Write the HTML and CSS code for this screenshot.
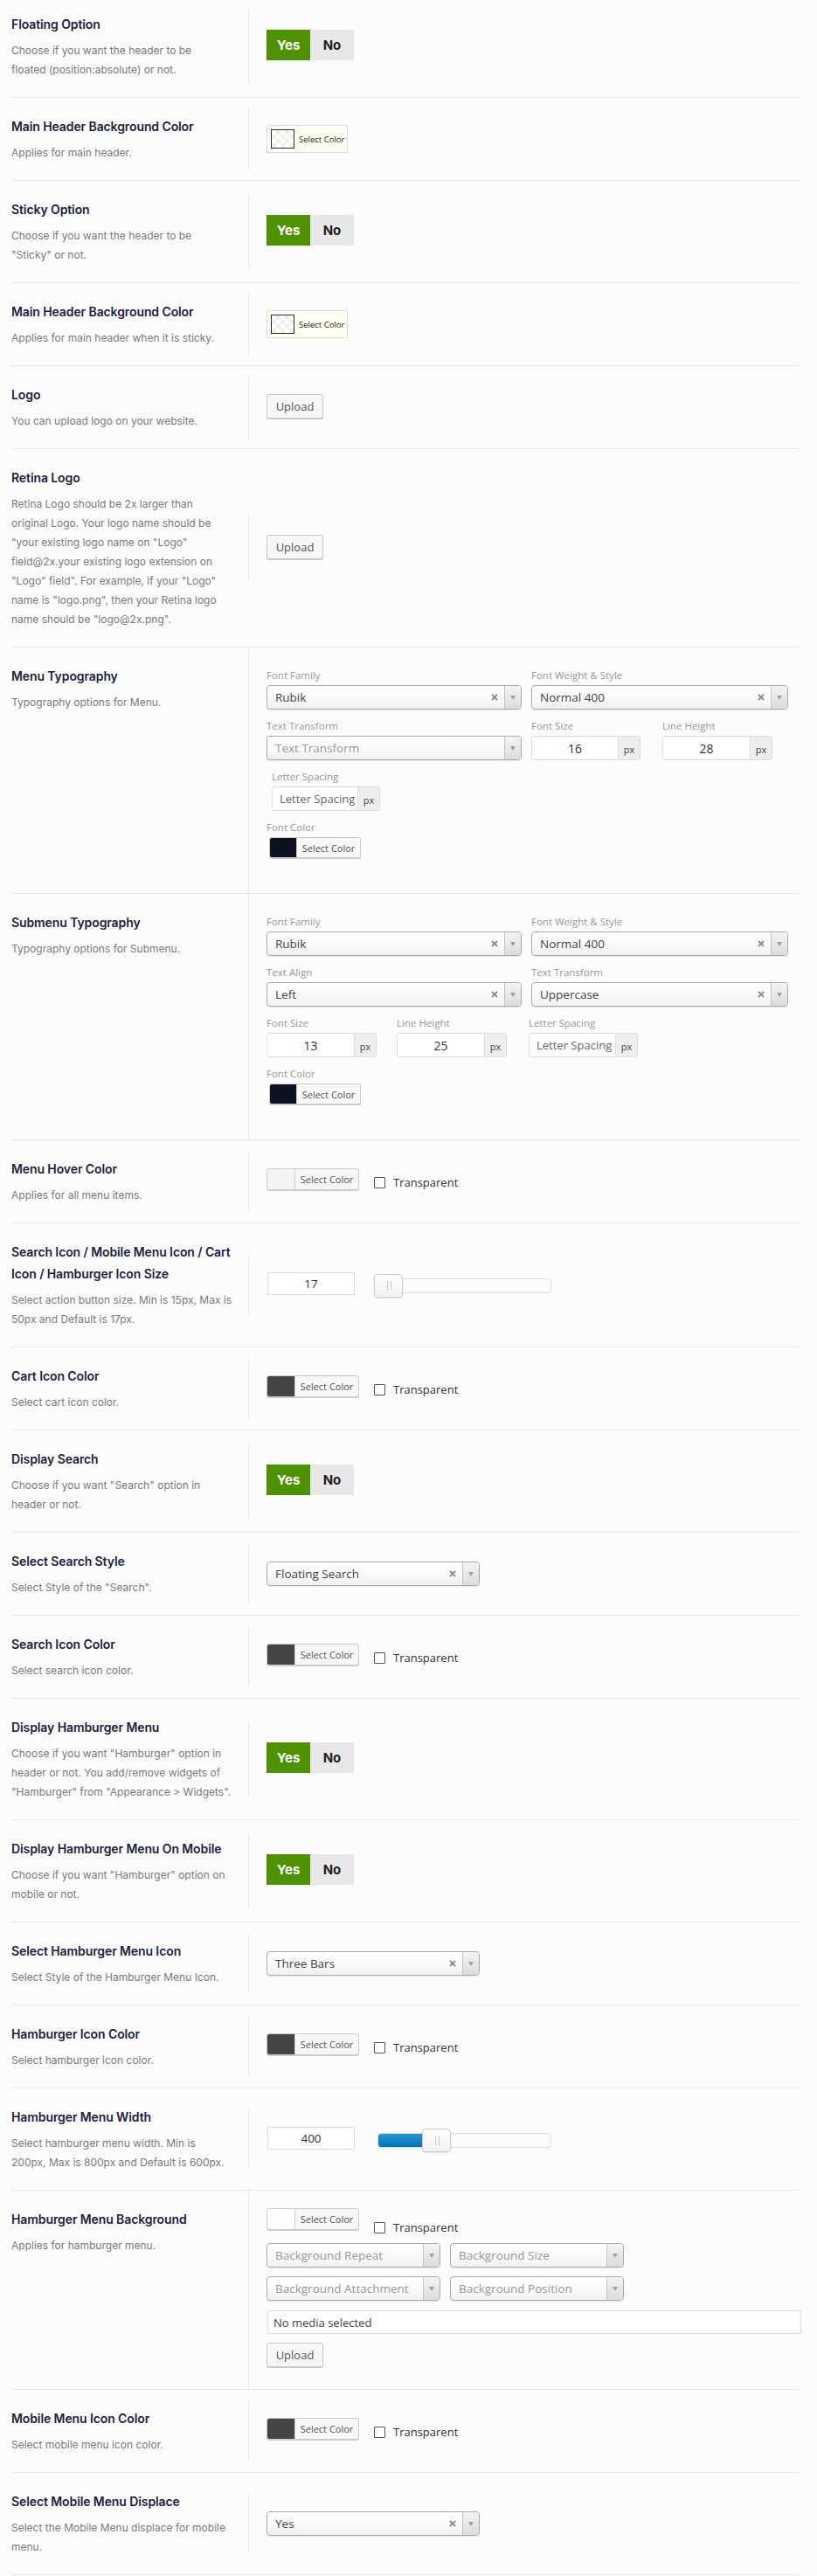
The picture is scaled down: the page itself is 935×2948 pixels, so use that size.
FILE: index.html
```html
<!DOCTYPE html>
<html>
<head>
<meta charset="utf-8">
<title>Header Options</title>
<link rel="stylesheet" href="styles.css">
</head>
<body>
<div class="panel">

  <div class="row">
    <div class="info"><h3 class="title">Floating Option</h3><p class="desc">Choose if you want the header to be<br>floated (position:absolute) or not.</p></div>
    <div class="field"><div class="switch"><span class="sw-yes">Yes</span><span class="sw-no">No</span></div></div>
  </div>

  <div class="row">
    <div class="info"><h3 class="title">Main Header Background Color</h3><p class="desc">Applies for main header.</p></div>
    <div class="field"><div class="picker-a"><span class="pa-swatch"></span><span class="pa-text">Select Color</span></div></div>
  </div>

  <div class="row">
    <div class="info"><h3 class="title">Sticky Option</h3><p class="desc">Choose if you want the header to be<br>"Sticky" or not.</p></div>
    <div class="field"><div class="switch"><span class="sw-yes">Yes</span><span class="sw-no">No</span></div></div>
  </div>

  <div class="row">
    <div class="info"><h3 class="title">Main Header Background Color</h3><p class="desc">Applies for main header when it is sticky.</p></div>
    <div class="field"><div class="picker-a"><span class="pa-swatch"></span><span class="pa-text">Select Color</span></div></div>
  </div>

  <div class="row">
    <div class="info"><h3 class="title">Logo</h3><p class="desc">You can upload logo on your website.</p></div>
    <div class="field"><div class="btn">Upload</div></div>
  </div>

  <div class="row">
    <div class="info"><h3 class="title">Retina Logo</h3><p class="desc">Retina Logo should be 2x larger than<br>original Logo. Your logo name should be<br>"your existing logo name on "Logo"<br>field@2x.your existing logo extension on<br>"Logo" field". For example, if your "Logo"<br>name is "logo.png", then your Retina logo<br>name should be "logo@2x.png".</p></div>
    <div class="field"><div class="btn">Upload</div></div>
  </div>

  <div class="row">
    <div class="info"><h3 class="title">Menu Typography</h3><p class="desc">Typography options for Menu.</p></div>
    <div class="field typo">
      <div class="tline">
        <div class="tf w-292"><span class="tf-label">Font Family</span>
          <div class="select"><span class="sel-val">Rubik</span><svg class="sel-clear" viewBox="0 0 8 8"><path d="M1 1L7 7M7 1L1 7"/></svg><span class="sel-arrow"></span></div></div>
        <div class="tf w-294 ml-11"><span class="tf-label">Font Weight &amp; Style</span>
          <div class="select"><span class="sel-val">Normal 400</span><svg class="sel-clear" viewBox="0 0 8 8"><path d="M1 1L7 7M7 1L1 7"/></svg><span class="sel-arrow"></span></div></div>
      </div>
      <div class="tline">
        <div class="tf w-292"><span class="tf-label">Text Transform</span>
          <div class="select"><span class="sel-val ph">Text Transform</span><span class="sel-arrow"></span></div></div>
        <div class="tf w-125 ml-11"><span class="tf-label">Font Size</span>
          <div class="unit"><span class="unit-val">16</span><span class="unit-px">px</span></div></div>
        <div class="tf w-126 ml-25"><span class="tf-label">Line Height</span>
          <div class="unit"><span class="unit-val">28</span><span class="unit-px">px</span></div></div>
      </div>
      <div class="tline">
        <div class="tf w-124 ml-6"><span class="tf-label">Letter Spacing</span>
          <div class="unit"><span class="unit-val ph">Letter Spacing</span><span class="unit-px">px</span></div></div>
      </div>
      <div class="tline">
        <div class="tf"><span class="tf-label">Font Color</span>
          <div class="picker pk-typo"><span class="swatch sw-navy"></span><span class="pk-text">Select Color</span></div></div>
      </div>
    </div>
  </div>

  <div class="row">
    <div class="info"><h3 class="title">Submenu Typography</h3><p class="desc">Typography options for Submenu.</p></div>
    <div class="field typo">
      <div class="tline">
        <div class="tf w-292"><span class="tf-label">Font Family</span>
          <div class="select"><span class="sel-val">Rubik</span><svg class="sel-clear" viewBox="0 0 8 8"><path d="M1 1L7 7M7 1L1 7"/></svg><span class="sel-arrow"></span></div></div>
        <div class="tf w-294 ml-11"><span class="tf-label">Font Weight &amp; Style</span>
          <div class="select"><span class="sel-val">Normal 400</span><svg class="sel-clear" viewBox="0 0 8 8"><path d="M1 1L7 7M7 1L1 7"/></svg><span class="sel-arrow"></span></div></div>
      </div>
      <div class="tline">
        <div class="tf w-292"><span class="tf-label">Text Align</span>
          <div class="select"><span class="sel-val">Left</span><svg class="sel-clear" viewBox="0 0 8 8"><path d="M1 1L7 7M7 1L1 7"/></svg><span class="sel-arrow"></span></div></div>
        <div class="tf w-294 ml-11"><span class="tf-label">Text Transform</span>
          <div class="select"><span class="sel-val">Uppercase</span><svg class="sel-clear" viewBox="0 0 8 8"><path d="M1 1L7 7M7 1L1 7"/></svg><span class="sel-arrow"></span></div></div>
      </div>
      <div class="tline">
        <div class="tf w-126"><span class="tf-label">Font Size</span>
          <div class="unit"><span class="unit-val">13</span><span class="unit-px">px</span></div></div>
        <div class="tf w-126 ml-23"><span class="tf-label">Line Height</span>
          <div class="unit"><span class="unit-val">25</span><span class="unit-px">px</span></div></div>
        <div class="tf w-125 ml-25"><span class="tf-label">Letter Spacing</span>
          <div class="unit"><span class="unit-val ph">Letter Spacing</span><span class="unit-px">px</span></div></div>
      </div>
      <div class="tline">
        <div class="tf"><span class="tf-label">Font Color</span>
          <div class="picker pk-typo"><span class="swatch sw-navy"></span><span class="pk-text">Select Color</span></div></div>
      </div>
    </div>
  </div>

  <div class="row">
    <div class="info"><h3 class="title">Menu Hover Color</h3><p class="desc">Applies for all menu items.</p></div>
    <div class="field"><div class="color-line"><div class="picker"><span class="swatch sw-empty"></span><span class="pk-text">Select Color</span></div><label class="check"><span class="box"></span>Transparent</label></div></div>
  </div>

  <div class="row">
    <div class="info"><h3 class="title">Search Icon / Mobile Menu Icon / Cart<br>Icon / Hamburger Icon Size</h3><p class="desc">Select action button size. Min is 15px, Max is<br>50px and Default is 17px.</p></div>
    <div class="field"><div class="slider-line"><div class="num">17</div><div class="track"><div class="range" style="width:5.7%"></div><span class="handle" style="left:calc(5.7% - 16px)"></span></div></div></div>
  </div>

  <div class="row">
    <div class="info"><h3 class="title">Cart Icon Color</h3><p class="desc">Select cart icon color.</p></div>
    <div class="field"><div class="color-line"><div class="picker"><span class="swatch sw-dark"></span><span class="pk-text">Select Color</span></div><label class="check"><span class="box"></span>Transparent</label></div></div>
  </div>

  <div class="row">
    <div class="info"><h3 class="title">Display Search</h3><p class="desc">Choose if you want "Search" option in<br>header or not.</p></div>
    <div class="field"><div class="switch"><span class="sw-yes">Yes</span><span class="sw-no">No</span></div></div>
  </div>

  <div class="row">
    <div class="info"><h3 class="title">Select Search Style</h3><p class="desc">Select Style of the "Search".</p></div>
    <div class="field"><div class="select w-244"><span class="sel-val">Floating Search</span><svg class="sel-clear" viewBox="0 0 8 8"><path d="M1 1L7 7M7 1L1 7"/></svg><span class="sel-arrow"></span></div></div>
  </div>

  <div class="row">
    <div class="info"><h3 class="title">Search Icon Color</h3><p class="desc">Select search icon color.</p></div>
    <div class="field"><div class="color-line"><div class="picker"><span class="swatch sw-dark"></span><span class="pk-text">Select Color</span></div><label class="check"><span class="box"></span>Transparent</label></div></div>
  </div>

  <div class="row">
    <div class="info"><h3 class="title">Display Hamburger Menu</h3><p class="desc">Choose if you want "Hamburger" option in<br>header or not. You add/remove widgets of<br>"Hamburger" from "Appearance &gt; Widgets".</p></div>
    <div class="field"><div class="switch"><span class="sw-yes">Yes</span><span class="sw-no">No</span></div></div>
  </div>

  <div class="row">
    <div class="info"><h3 class="title">Display Hamburger Menu On Mobile</h3><p class="desc">Choose if you want "Hamburger" option on<br>mobile or not.</p></div>
    <div class="field"><div class="switch"><span class="sw-yes">Yes</span><span class="sw-no">No</span></div></div>
  </div>

  <div class="row">
    <div class="info"><h3 class="title">Select Hamburger Menu Icon</h3><p class="desc">Select Style of the Hamburger Menu Icon.</p></div>
    <div class="field"><div class="select w-244"><span class="sel-val">Three Bars</span><svg class="sel-clear" viewBox="0 0 8 8"><path d="M1 1L7 7M7 1L1 7"/></svg><span class="sel-arrow"></span></div></div>
  </div>

  <div class="row">
    <div class="info"><h3 class="title">Hamburger Icon Color</h3><p class="desc">Select hamburger icon color.</p></div>
    <div class="field"><div class="color-line"><div class="picker"><span class="swatch sw-dark"></span><span class="pk-text">Select Color</span></div><label class="check"><span class="box"></span>Transparent</label></div></div>
  </div>

  <div class="row">
    <div class="info"><h3 class="title">Hamburger Menu Width</h3><p class="desc">Select hamburger menu width. Min is<br>200px, Max is 800px and Default is 600px.</p></div>
    <div class="field"><div class="slider-line"><div class="num">400</div><div class="track"><div class="range" style="width:33.3%"></div><span class="handle" style="left:calc(33.3% - 16px)"></span></div></div></div>
  </div>

  <div class="row">
    <div class="info"><h3 class="title">Hamburger Menu Background</h3><p class="desc">Applies for hamburger menu.</p></div>
    <div class="field bg-stack">
      <div class="color-line tall"><div class="picker"><span class="swatch sw-white"></span><span class="pk-text">Select Color</span></div><label class="check low"><span class="box"></span>Transparent</label></div>
      <div class="bg-selects">
        <div class="select w-199"><span class="sel-val ph">Background Repeat</span><span class="sel-arrow"></span></div>
        <div class="select w-199"><span class="sel-val ph">Background Size</span><span class="sel-arrow"></span></div>
      </div>
      <div class="bg-selects second">
        <div class="select w-199"><span class="sel-val ph">Background Attachment</span><span class="sel-arrow"></span></div>
        <div class="select w-199"><span class="sel-val ph">Background Position</span><span class="sel-arrow"></span></div>
      </div>
      <div class="media">No media selected</div>
      <div class="btn btn-media">Upload</div>
    </div>
  </div>

  <div class="row">
    <div class="info"><h3 class="title">Mobile Menu Icon Color</h3><p class="desc">Select mobile menu icon color.</p></div>
    <div class="field"><div class="color-line"><div class="picker"><span class="swatch sw-dark"></span><span class="pk-text">Select Color</span></div><label class="check"><span class="box"></span>Transparent</label></div></div>
  </div>

  <div class="row">
    <div class="info"><h3 class="title">Select Mobile Menu Displace</h3><p class="desc">Select the Mobile Menu displace for mobile<br>menu.</p></div>
    <div class="field"><div class="select w-244"><span class="sel-val">Yes</span><svg class="sel-clear" viewBox="0 0 8 8"><path d="M1 1L7 7M7 1L1 7"/></svg><span class="sel-arrow"></span></div></div>
  </div>

</div>
</body>
</html>
```

FILE: styles.css
```css
* { box-sizing: border-box; }

body {
  margin: 0;
  background: #fcfcfc;
  font-family: "Inter", "Open Sans", sans-serif;
}

.panel {
  margin: -5px 20px 0 13px;
}

.row {
  display: flex;
  border-bottom: 1px solid #e6e6e6;
}

.info {
  flex: 0 0 271px;
  align-self: flex-start;
  padding: 20px 0;
}

.title {
  margin: 0 0 7px;
  font-size: 14px;
  line-height: 25px;
  font-weight: 600;
  color: #1b2240;
  letter-spacing: -0.1px;
}

.desc {
  margin: 0;
  font-size: 12px;
  line-height: 22px;
  color: #7b7b7b;
}

.field {
  flex: 1;
  align-self: center;
  border-left: 1px solid #e8e8e8;
  padding: 20px 0 20px 20px;
  font-family: "Open Sans", "Liberation Sans", sans-serif;
}

/* Yes / No switch */
.switch {
  display: flex;
  width: 100px;
  height: 35px;
  margin: 4px 0 7px;
  font-family: "Inter", sans-serif;
  font-weight: 700;
  font-size: 15px;
}
.switch span {
  flex: 1;
  display: flex;
  align-items: center;
  justify-content: center;
}
.sw-yes { background: #4f9200; color: #fff; }
.sw-no { background: #e8e8e8; color: #222; }

/* cream picker */
.picker-a {
  display: flex;
  align-items: center;
  width: 93px;
  height: 32px;
  padding: 0 4px;
  background: #fffef2;
  border: 1px solid #dedede;
}
.pa-swatch {
  flex: none;
  width: 27px;
  height: 22px;
  border: 1px solid #2a2a2a;
  background: repeating-conic-gradient(#eeeeee 0 25%, #ffffff 0 50%) 0 0 / 10px 10px;
}
.pa-text {
  margin-left: 5px;
  font-size: 9.5px;
  color: #222;
  white-space: nowrap;
}

/* button */
.btn {
  display: flex;
  align-items: center;
  justify-content: center;
  width: 65px;
  height: 28px;
  margin: 2px 0 5px;
  border: 1px solid #c8c8c8;
  border-radius: 3px;
  background: #f7f7f7;
  box-shadow: 0 1px 0 #cccccc;
  font-size: 13px;
  color: #555;
}

/* chosen-like select */
.select {
  display: flex;
  align-items: center;
  height: 28px;
  border: 1px solid #aaaaaa;
  border-radius: 4px;
  background: linear-gradient(#ffffff 0%, #fbfbfb 45%, #f1f1f1 100%);
  box-shadow: 0 1px 1px rgba(0, 0, 0, 0.08);
  font-size: 13.5px;
  color: #444;
  overflow: hidden;
}
.sel-val {
  flex: 1;
  padding-left: 9px;
  white-space: nowrap;
  overflow: hidden;
}
.sel-val.ph { color: #999; }
.sel-clear {
  flex: none;
  width: 8px;
  height: 8px;
  margin-right: 7px;
  stroke: #8a8a8a;
  stroke-width: 1.8;
}
.sel-arrow {
  flex: none;
  width: 19px;
  align-self: stretch;
  display: flex;
  align-items: center;
  justify-content: center;
  border-left: 1px solid #c4c4c4;
  background: linear-gradient(#f4f4f4, #dcdcdc);
}
.sel-arrow::after {
  content: "";
  border-left: 3px solid transparent;
  border-right: 3px solid transparent;
  border-top: 5px solid #a0a0a0;
}

.w-244 { width: 244px; }
.w-199 { width: 199px; }

/* typography block */
.field.typo {
  align-self: stretch;
  padding: 22px 0 40px 20px;
}
.tline { display: flex; }
.tline + .tline { margin-top: 9px; }
.tf { display: flex; flex-direction: column; }
.tf-label {
  display: block;
  font-size: 11.5px;
  line-height: 20px;
  margin-bottom: 1px;
  color: #999;
}
.w-292 { width: 292px; }
.w-294 { width: 294px; }
.w-124 { width: 124px; }
.w-125 { width: 125px; }
.w-126 { width: 126px; }
.ml-6 { margin-left: 6px; }
.ml-11 { margin-left: 11px; }
.ml-23 { margin-left: 23px; }
.ml-25 { margin-left: 25px; }

.unit {
  display: flex;
  height: 28px;
  border: 1px solid #dddddd;
  border-radius: 3px;
  background: #fff;
  font-size: 14px;
  color: #333;
  overflow: hidden;
}
.unit-val {
  flex: 1;
  display: flex;
  align-items: center;
  justify-content: center;
  white-space: nowrap;
  overflow: hidden;
}
.unit-val.ph {
  justify-content: flex-start;
  padding-left: 8px;
  font-size: 13px;
  color: #666;
}
.unit-px {
  flex: none;
  width: 25px;
  display: flex;
  align-items: center;
  justify-content: center;
  padding-top: 2px;
  border-left: 1px solid #dddddd;
  background: #eeeeee;
  font-size: 11px;
  color: #444;
}

/* wp color picker */
.picker {
  flex: none;
  display: flex;
  width: 106px;
  height: 25px;
  border: 1px solid #cccccc;
  border-radius: 3px;
  background: #f7f7f7;
  box-shadow: 0 1px 0 #cccccc;
  overflow: hidden;
}
.picker.pk-typo {
  width: 105px;
  height: 24px;
  margin-left: 3px;
}
.swatch {
  flex: none;
  width: 32px;
  border-right: 1px solid #cccccc;
}
.pk-typo .swatch { width: 31px; }
.sw-dark { background: #444444; }
.sw-navy { background: #0c1220; }
.sw-empty { background: #f4f4f4; }
.sw-white { background: #ffffff; }
.pk-text {
  flex: 1;
  display: flex;
  align-items: center;
  justify-content: center;
  font-size: 11px;
  color: #555;
  white-space: nowrap;
}

.color-line {
  display: flex;
  align-items: flex-start;
  height: 30px;
}
.color-line.tall { height: 32px; }
.check {
  display: flex;
  align-items: center;
  margin: 5px 0 0 17px;
  font-size: 13px;
  line-height: 22px;
  color: #333;
}
.check.low { margin-top: 11px; }
.box {
  flex: none;
  width: 13px;
  height: 13px;
  margin-right: 9px;
  border: 1px solid #555;
  border-radius: 1px;
  background: #fff;
}

/* slider */
.slider-line {
  display: flex;
  align-items: flex-start;
  height: 29px;
}
.num {
  flex: none;
  width: 100px;
  height: 26px;
  margin-left: 1px;
  display: flex;
  align-items: center;
  justify-content: center;
  border: 1px solid #dddddd;
  background: #fff;
  font-size: 13.5px;
  color: #333;
}
.track {
  position: relative;
  flex: none;
  width: 199px;
  height: 17px;
  margin: 7px 0 0 26px;
  border: 1px solid #dddddd;
  border-radius: 4px;
  background: #fbfbfb;
}
.range {
  position: absolute;
  left: 0;
  top: 0;
  bottom: 0;
  border-radius: 3px 0 0 3px;
  background: linear-gradient(#2a95d6, #0074b8);
}
.handle {
  position: absolute;
  top: -6px;
  width: 33px;
  height: 27px;
  border: 1px solid #cccccc;
  border-radius: 4px;
  background: linear-gradient(#ffffff, #f1f1f1);
  box-shadow: 0 1px 2px rgba(0, 0, 0, 0.1);
}
.handle::after {
  content: "";
  position: absolute;
  left: 14px;
  top: 7px;
  width: 3px;
  height: 11px;
  border-left: 1px solid #cccccc;
  border-right: 1px solid #cccccc;
}

/* hamburger background stack */
.field.bg-stack { align-self: stretch; }
.bg-selects {
  display: flex;
  gap: 11px;
  margin-top: 8px;
}
.bg-selects.second { margin-top: 10px; }
.media {
  width: 611px;
  height: 27px;
  margin: 11px 0 0 1px;
  padding-left: 6px;
  display: flex;
  align-items: center;
  border: 1px solid #dddddd;
  background: #fff;
  font-size: 13px;
  color: #444;
}
.btn.btn-media { margin-top: 10px; }
```
